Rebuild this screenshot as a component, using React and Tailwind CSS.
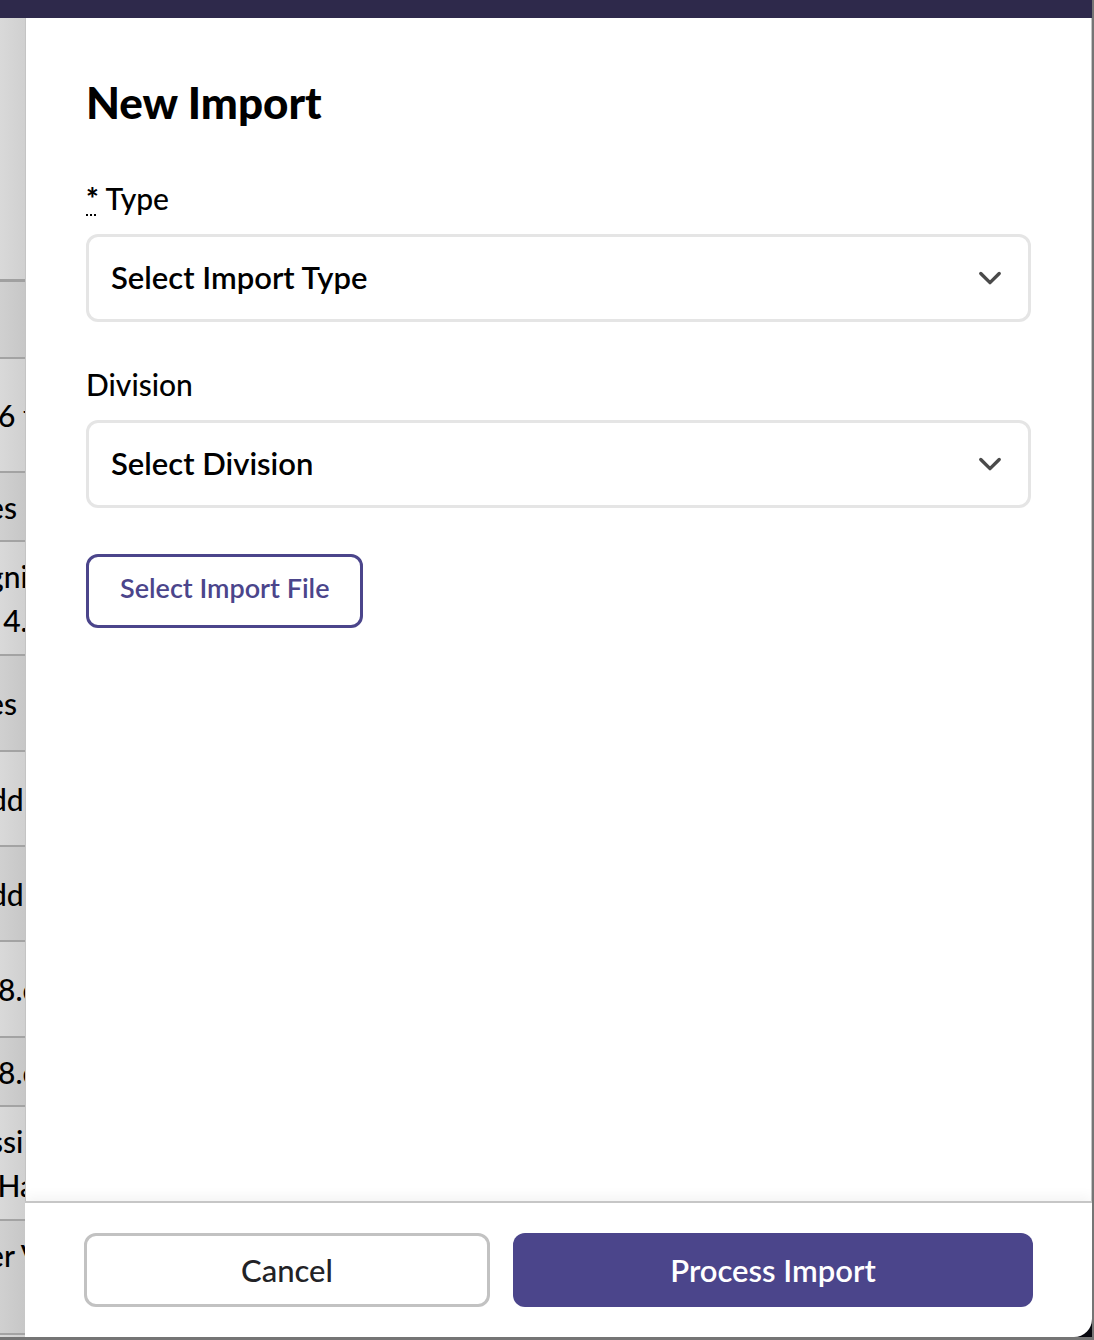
import React, { useRef, useState } from "react";

const rows = [
  { height: "h-[77px]", lines: [] },
  { height: "h-[114px]", indent: "-ml-0.5", lines: ["6 f"] },
  { height: "h-[69px]", indent: "-ml-3", lines: ["es"] },
  { height: "h-[114px]", indent: "-ml-3", lines: ["gni", "\u00a0\u00a04."] },
  { height: "h-[96px]", indent: "-ml-3", lines: ["es"] },
  { height: "h-[95px]", indent: "-ml-2.5", lines: ["dd"] },
  { height: "h-[95px]", indent: "-ml-2.5", lines: ["dd"] },
  { height: "h-[96px]", indent: "-ml-0.5", lines: ["8.c"] },
  { height: "h-[69px]", indent: "-ml-0.5", lines: ["8.c"] },
  { height: "h-[114px]", indent: "-ml-2.5", lines: ["ssi", "\u00a0Ha"] },
  { height: "h-[114px]", indent: "-ml-3", lines: ["er V", "\u00a0"] },
];

const ImportsList = () => (
  <div className="w-[25px] shrink-0 overflow-hidden bg-linear-to-r from-[#d9d9d9] to-[#d0d0d0]">
    <div className="h-[264px] border-b-3 border-[#a0a0a0]" />
    <ul>
      {rows.map((row, index) => (
        <li
          key={index}
          className={
            "flex flex-col justify-center border-b-2 border-[#a3a3a3] text-[30px] leading-[44px] font-medium whitespace-nowrap odd:bg-black/4 " +
            row.height
          }
        >
          {row.lines.map((line) => (
            <span key={line} className={row.indent}>
              {line}
            </span>
          ))}
        </li>
      ))}
    </ul>
  </div>
);

const SelectField = ({ id, label, required, placeholder }) => (
  <div className="mb-10">
    <label htmlFor={id} className="mb-3.5 block text-[30px] leading-[44px] font-medium">
      {required && (
        <>
          <abbr
            title="required"
            className="font-black underline decoration-dotted decoration-2 underline-offset-4"
          >
            *
          </abbr>{" "}
        </>
      )}
      {label}
    </label>
    <div className="grid items-center">
      <select
        id={id}
        defaultValue=""
        className="col-start-1 row-start-1 h-[88px] w-full appearance-none rounded-xl border-3 border-[#e5e5e5] bg-white px-[22px] pb-0.5 text-[31px] font-semibold"
      >
        <option value="">{placeholder}</option>
      </select>
      <svg
        className="pointer-events-none col-start-1 row-start-1 mr-[29px] justify-self-end"
        width="24"
        height="16"
        viewBox="0 0 24 16"
        fill="none"
        stroke="#4a4a4a"
        strokeWidth="3.4"
        strokeLinecap="round"
        strokeLinejoin="round"
        aria-hidden="true"
      >
        <path d="M2.8 3.5 12 12.6 21.2 3.5" />
      </svg>
    </div>
  </div>
);

const App = () => {
  const [open, setOpen] = useState(true);
  const fileInput = useRef(null);

  return (
    <div className="flex min-h-screen flex-col border-r-2 border-b-3 border-[#757575] bg-[#08080f] font-['Lato',sans-serif] text-black">
      <header className="h-[18px] shrink-0 bg-[#2e294b]" />
      <main className="flex flex-1">
        <ImportsList />
        {open && (
          <form
            className="flex min-w-0 flex-1 flex-col overflow-hidden rounded-br-[18px] bg-white"
            onSubmit={(evt) => evt.preventDefault()}
          >
            <section className="flex-1 border-x border-[#c4c4c4] px-[60px] pt-[57px]">
              <h1 className="mb-[47px] text-[44px] leading-[54px] font-black">New Import</h1>
              <SelectField id="type" label="Type" required placeholder="Select Import Type" />
              <SelectField id="division" label="Division" placeholder="Select Division" />
              <input ref={fileInput} type="file" className="hidden" aria-label="Import file" />
              <button
                type="button"
                className="mt-1.5 h-[74px] rounded-xl border-3 border-[#4b458b] px-[31px] pb-1.5 text-[27px] font-semibold text-[#4b458b]"
                onClick={() => fileInput.current.click()}
              >
                Select Import File
              </button>
            </section>
            <footer className="flex gap-[23px] border-t-2 border-[#c6c6c6] px-[59px] py-[30px] shadow-[0_-4px_12px_rgba(0,0,0,0.05)]">
              <button
                type="button"
                className="h-[74px] flex-[10] rounded-xl border-3 border-[#c2c2c2] text-[31px] font-medium text-[#222226]"
                onClick={() => setOpen(false)}
              >
                Cancel
              </button>
              <button
                type="submit"
                className="h-[74px] flex-[13] rounded-xl bg-[#4b458b] text-[31px] font-semibold text-white"
              >
                Process Import
              </button>
            </footer>
          </form>
        )}
      </main>
    </div>
  );
};

export default App;
